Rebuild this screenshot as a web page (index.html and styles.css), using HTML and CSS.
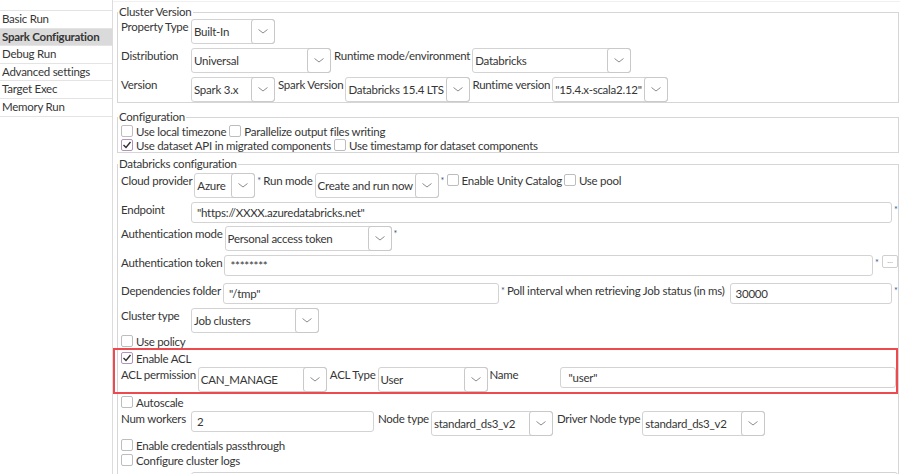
FILE: index.html
```html
<!DOCTYPE html>
<html lang="en">
<head>
  <meta charset="UTF-8">
  <title>Spark Configuration</title>
  <link rel="stylesheet" href="styles.css">
</head>
<body>
  <div class="window">

    <nav class="sidebar">
      <ul class="nav-list">
        <li>Basic Run</li>
        <li class="active">Spark Configuration</li>
        <li>Debug Run</li>
        <li>Advanced settings</li>
        <li>Target Exec</li>
        <li>Memory Run</li>
      </ul>
    </nav>

    <main class="panel">

      <!-- cluster version -->
      <fieldset class="group group-cluster">
        <legend>Cluster Version</legend>
        <div class="row first">
          <span class="lbl">Property Type</span>
          <div class="combo w84"><span class="value">Built-In</span><span class="drop"><svg width="10" height="5" viewBox="0 0 10 5"><polyline points="0.5,0.5 5,4 9.5,0.5"/></svg></span></div>
        </div>
        <div class="row">
          <span class="lbl">Distribution</span>
          <div class="combo w140"><span class="value">Universal</span><span class="drop"><svg width="10" height="5" viewBox="0 0 10 5"><polyline points="0.5,0.5 5,4 9.5,0.5"/></svg></span></div>
          <span class="lbl inline sp">Runtime mode/environment</span>
          <div class="combo w159"><span class="value">Databricks</span><span class="drop"><svg width="10" height="5" viewBox="0 0 10 5"><polyline points="0.5,0.5 5,4 9.5,0.5"/></svg></span></div>
        </div>
        <div class="row">
          <span class="lbl">Version</span>
          <div class="combo w84"><span class="value">Spark 3.x</span><span class="drop"><svg width="10" height="5" viewBox="0 0 10 5"><polyline points="0.5,0.5 5,4 9.5,0.5"/></svg></span></div>
          <span class="lbl inline sp">Spark Version</span>
          <div class="combo w125"><span class="value">Databricks 15.4 LTS</span><span class="drop"><svg width="10" height="5" viewBox="0 0 10 5"><polyline points="0.5,0.5 5,4 9.5,0.5"/></svg></span></div>
          <span class="lbl inline">Runtime version</span>
          <div class="combo w116"><span class="value">"15.4.x-scala2.12"</span><span class="drop"><svg width="10" height="5" viewBox="0 0 10 5"><polyline points="0.5,0.5 5,4 9.5,0.5"/></svg></span></div>
        </div>
      </fieldset>

      <!-- configuration -->
      <fieldset class="group group-config">
        <legend>Configuration</legend>
        <div class="check-row">
          <span class="opt"><span class="check"></span>Use local timezone</span>
          <span class="opt"><span class="check"></span>Parallelize output files writing</span>
        </div>
        <div class="check-row">
          <span class="opt"><span class="check on"><svg width="10" height="10" viewBox="0 0 10 10"><polyline points="1.5,5 4,7.5 8.5,2"/></svg></span>Use dataset API in migrated components</span>
          <span class="opt"><span class="check"></span>Use timestamp for dataset components</span>
        </div>
      </fieldset>

      <!-- databricks -->
      <fieldset class="group group-databricks">
        <legend>Databricks configuration</legend>
        <div class="row first">
          <span class="lbl">Cloud provider</span>
          <div class="combo w61"><span class="value">Azure</span><span class="drop"><svg width="10" height="5" viewBox="0 0 10 5"><polyline points="0.5,0.5 5,4 9.5,0.5"/></svg></span></div>
          <span class="req">*</span>
          <span class="lbl inline">Run mode</span>
          <div class="combo w124"><span class="value">Create and run now</span><span class="drop"><svg width="10" height="5" viewBox="0 0 10 5"><polyline points="0.5,0.5 5,4 9.5,0.5"/></svg></span></div>
          <span class="req">*</span>
          <span class="opt"><span class="check"></span>Enable Unity Catalog</span>
          <span class="opt"><span class="check"></span>Use pool</span>
        </div>
        <div class="row">
          <span class="lbl">Endpoint</span>
          <div class="field grow">"https://XXXX.azuredatabricks.net"</div>
          <span class="req">*</span>
        </div>
        <div class="row mt3">
          <span class="lbl">Authentication mode</span>
          <div class="combo w167"><span class="value">Personal access token</span><span class="drop"><svg width="10" height="5" viewBox="0 0 10 5"><polyline points="0.5,0.5 5,4 9.5,0.5"/></svg></span></div>
          <span class="req">*</span>
        </div>
        <div class="row">
          <span class="lbl">Authentication token</span>
          <div class="field grow">********</div>
          <span class="req">*</span>
          <span class="dots">...</span>
        </div>
        <div class="row mt7">
          <span class="lbl">Dependencies folder</span>
          <div class="field w276">"/tmp"</div>
          <span class="req">*</span>
          <span class="lbl inline poll">Poll interval when retrieving Job status (in ms)</span>
          <div class="field grow">30000</div>
          <span class="req">*</span>
        </div>
        <div class="row">
          <span class="lbl">Cluster type</span>
          <div class="combo w128"><span class="value">Job clusters</span><span class="drop"><svg width="10" height="5" viewBox="0 0 10 5"><polyline points="0.5,0.5 5,4 9.5,0.5"/></svg></span></div>
        </div>
        <div class="check-row mt1">
          <span class="opt"><span class="check"></span>Use policy</span>
        </div>

        <div class="acl-box">
          <div class="check-row">
            <span class="opt"><span class="check on"><svg width="10" height="10" viewBox="0 0 10 10"><polyline points="1.5,5 4,7.5 8.5,2"/></svg></span>Enable ACL</span>
          </div>
          <div class="row mt2">
            <span class="lbl">ACL permission</span>
            <div class="combo w129"><span class="value">CAN_MANAGE</span><span class="drop"><svg width="10" height="5" viewBox="0 0 10 5"><polyline points="0.5,0.5 5,4 9.5,0.5"/></svg></span></div>
            <span class="lbl inline sp">ACL Type</span>
            <div class="combo w110"><span class="value">User</span><span class="drop"><svg width="10" height="5" viewBox="0 0 10 5"><polyline points="0.5,0.5 5,4 9.5,0.5"/></svg></span></div>
            <span class="lbl">Name</span>
            <div class="field grow name">"user"</div>
          </div>
        </div>

        <div class="check-row mt1">
          <span class="opt"><span class="check"></span>Autoscale</span>
        </div>
        <div class="row mt2">
          <span class="lbl">Num workers</span>
          <div class="field w183">2</div>
          <span class="lbl inline sp2">Node type</span>
          <div class="combo w122"><span class="value">standard_ds3_v2</span><span class="drop"><svg width="10" height="5" viewBox="0 0 10 5"><polyline points="0.5,0.5 5,4 9.5,0.5"/></svg></span></div>
          <span class="lbl inline sp2">Driver Node type</span>
          <div class="combo w123"><span class="value">standard_ds3_v2</span><span class="drop"><svg width="10" height="5" viewBox="0 0 10 5"><polyline points="0.5,0.5 5,4 9.5,0.5"/></svg></span></div>
        </div>
        <div class="check-row mt2">
          <span class="opt"><span class="check"></span>Enable credentials passthrough</span>
        </div>
        <div class="check-row mt1">
          <span class="opt"><span class="check"></span>Configure cluster logs</span>
        </div>
        <div class="row mt5">
          <span class="lbl"></span>
          <div class="field grow"></div>
        </div>
      </fieldset>

    </main>
  </div>
</body>
</html>
```

FILE: styles.css
```css
* {
    box-sizing: border-box;
}

body {
    margin: 0;
    font-family: Lato, "Noto Sans", sans-serif;
    font-size: 11.5px;
    letter-spacing: -0.25px;
    color: #363636;
    background-color: #fff;
}

.window {
    display: flex;
    height: 474px;
    overflow: hidden;
}

/* left menu */
.sidebar {
    flex: none;
    width: 113px;
    padding-top: 10px;
    border-right: 1px solid #dcdcdc;
}

.nav-list {
    list-style: none;
    margin: 0;
    padding: 0;
    border-top: 1px solid #e4e4e4;
}

.nav-list li {
    height: 17.6px;
    line-height: 16.6px;
    padding-left: 2px;
    border-bottom: 1px solid #e4e4e4;
    white-space: nowrap;
}

.nav-list li.active {
    background-color: #dadada;
    font-weight: bold;
}

/* right panel */
.panel {
    flex: 1;
    min-width: 0;
    margin-top: 1px;
    padding: 3px 1px 0 4px;
    border-top: 1px solid #f0f0f0;
}

.group {
    margin: 0;
    padding: 0 0 0 3px;
    min-width: 0;
    border: 1px solid #d6d6d6;
}

.group legend {
    margin-left: -3px;
    padding: 0 1px;
    line-height: 14px;
}

.group-cluster {
    margin-bottom: 7px;
}

.group-config {
    margin-bottom: 4px;
}

.group-databricks {
    padding-top: 2px;
    height: 400px;
}

.row {
    display: flex;
    align-items: flex-start;
    gap: 2px;
    margin-top: 4px;
}

.row.first {
    margin-top: 0;
}

.mt1 { margin-top: 1px; }
.mt2 { margin-top: 2px; }
.mt3 { margin-top: 3px; }
.mt5 { margin-top: 5px; }
.mt7 { margin-top: 7px; }

.lbl {
    flex: none;
    min-width: 68px;
    line-height: 16px;
    white-space: nowrap;
}

.lbl.inline {
    min-width: 0;
}

.lbl.sp {
    margin-left: 1px;
}

.lbl.sp2 {
    margin-left: 2px;
}

.lbl.poll {
    margin-right: 3px;
}

/* combo boxes */
.combo {
    flex: none;
    display: flex;
    height: 25px;
    border: 1px solid #d3d3d3;
    border-radius: 3px;
    background-color: #fff;
}

.combo .value {
    flex: 1;
    min-width: 0;
    padding-left: 2px;
    line-height: 23px;
    white-space: nowrap;
    overflow: hidden;
}

.combo .drop {
    flex: none;
    width: 24px;
    margin: -1px -1px -1px 0;
    border: 1px solid #c9c9c9;
    border-radius: 3px;
    display: flex;
    align-items: center;
    justify-content: center;
}

.combo .drop polyline {
    fill: none;
    stroke: #8c8c8c;
    stroke-width: 1;
}

.w61 { width: 61px; }
.w84 { width: 84px; }
.w110 { width: 110px; }
.w116 { width: 116px; }
.w122 { width: 122px; }
.w123 { width: 123px; }
.w124 { width: 124px; }
.w125 { width: 125px; }
.w128 { width: 128px; }
.w129 { width: 129px; }
.w140 { width: 140px; }
.w159 { width: 159px; }
.w167 { width: 167px; }
.w183 { width: 183px; }
.w276 { width: 276px; }

/* text fields */
.field {
    flex: none;
    height: 21px;
    padding-left: 5px;
    line-height: 19px;
    border: 1px solid #d3d3d3;
    border-radius: 3px;
    background-color: #fff;
    white-space: nowrap;
    overflow: hidden;
}

.field.grow {
    flex: 1;
    min-width: 0;
}

.field.name {
    padding-left: 8px;
}

.req {
    flex: none;
    width: 4px;
    margin-top: 3px;
    font-size: 9px;
    line-height: 1;
    color: #3b5683;
}

.dots {
    flex: none;
    width: 16px;
    height: 13px;
    margin-left: 1px;
    border: 1px solid #cfcfcf;
    border-radius: 2px;
    font-size: 8px;
    line-height: 8px;
    letter-spacing: 0;
    text-align: center;
    color: #9a9a9a;
}

/* check boxes */
.check-row {
    display: flex;
    gap: 3px;
    height: 14px;
}

.opt {
    flex: none;
    display: inline-flex;
    align-items: center;
    gap: 3px;
    height: 14px;
    white-space: nowrap;
}

.check {
    flex: none;
    width: 12px;
    height: 12px;
    border: 1px solid #bdbdbd;
    border-radius: 2px;
    background-color: #fff;
    display: flex;
    align-items: center;
    justify-content: center;
}

.check.on {
    border-color: #b392bb;
}

.check polyline {
    fill: none;
    stroke: #2e2e2e;
    stroke-width: 1.4;
}

/* red annotation frame round the ACL settings */
.acl-box {
    margin: 0 0 0 -8px;
    padding: 1px 0 0 6px;
    border: 2px solid #ec4a4f;
}
```
